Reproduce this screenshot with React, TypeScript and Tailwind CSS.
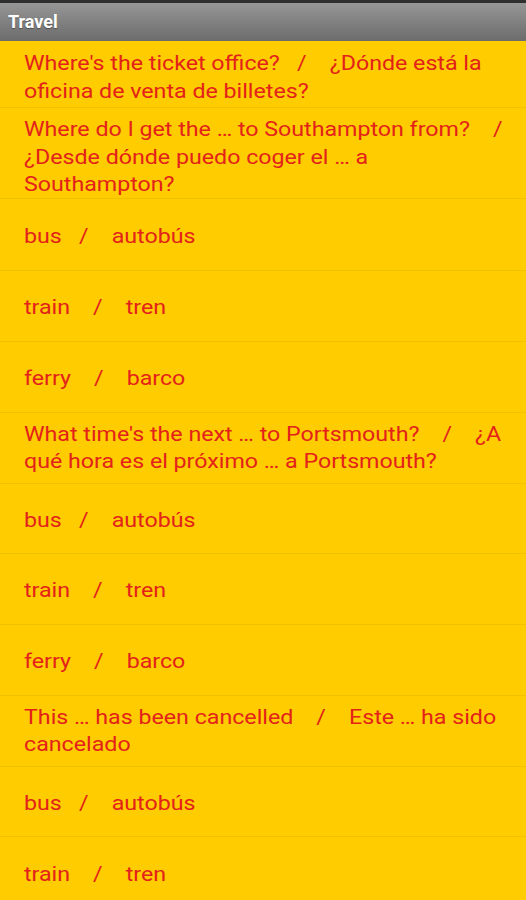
const ROWS: { text: string; h: string }[] = [
  { text: "Where's the ticket office?   /    ¿Dónde está la oficina de venta de billetes?", h: "h-[67px] pt-[7px]" },
  { text: "Where do I get the … to Southampton from?    /    ¿Desde dónde puedo coger el … a Southampton?", h: "h-[91px] pt-[9px]" },
  { text: "bus   /    autobús", h: "h-[72px] pt-[4px]" },
  { text: "train    /    tren", h: "h-[71px] pt-[4px]" },
  { text: "ferry    /    barco", h: "h-[71px] pt-[3px]" },
  { text: "What time's the next … to Portsmouth?    /    ¿A qué hora es el próximo … a Portsmouth?", h: "h-[71px]" },
  { text: "bus   /    autobús", h: "h-[70px] pt-[4px]" },
  { text: "train    /    tren", h: "h-[71px] pt-[4px]" },
  { text: "ferry    /    barco", h: "h-[71px] pt-[4px]" },
  { text: "This … has been cancelled    /    Este … ha sido cancelado", h: "h-[71px]" },
  { text: "bus   /    autobús", h: "h-[70px] pt-[4px]" },
  { text: "train    /    tren", h: "h-[71px] pt-[5px]" },
];

export default function App() {
  return (
    <div className="w-[526px] h-[900px] overflow-hidden bg-[#ffcc00] font-['Roboto',sans-serif]">
      {/* title bar */}
      <div className="h-[41px] border-t-[3px] border-[#2e2e2e] bg-gradient-to-b from-[#969696] to-[#6c6c6c] flex items-center px-[8px]">
        <span className="text-white font-bold text-[18px] leading-none [text-shadow:0_1px_1px_rgba(0,0,0,0.35)]">
          Travel
        </span>
      </div>

      <ul>
        {ROWS.map((r, i) => (
          <li key={i} className={`${r.h} flex items-center border-b border-[#f0c100] pl-[24px]`}>
            <p className="w-[410px] origin-left scale-x-[1.19] whitespace-pre-wrap text-[19.5px] leading-[27.5px] text-[#e3221a]">
              {r.text}
            </p>
          </li>
        ))}
      </ul>
    </div>
  );
}
